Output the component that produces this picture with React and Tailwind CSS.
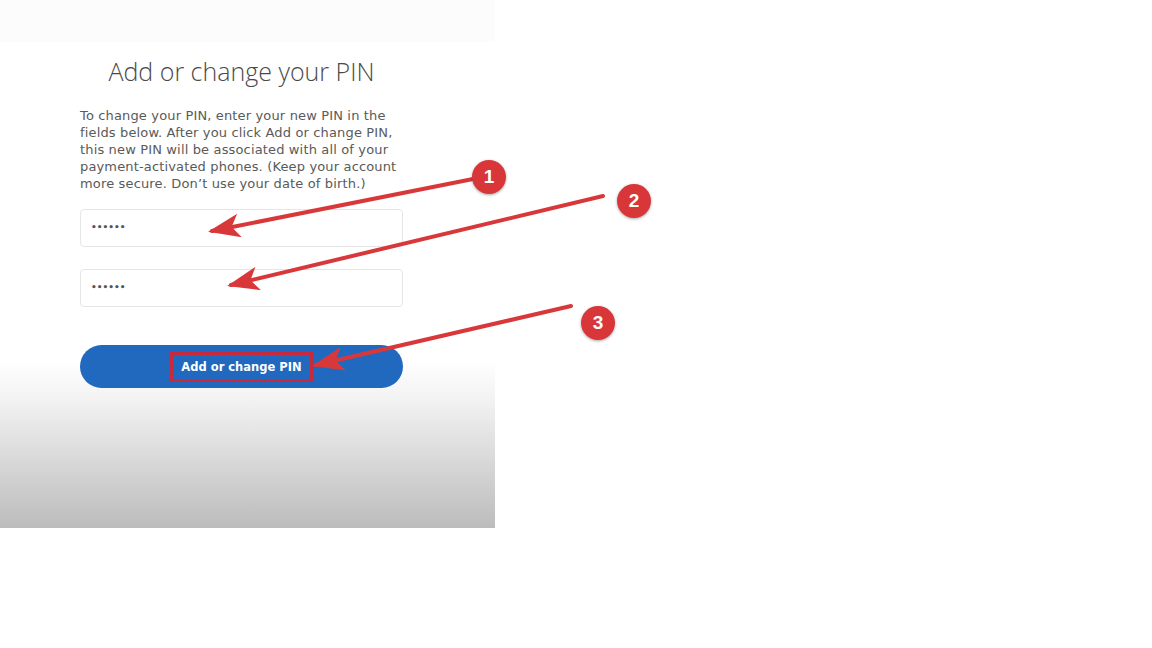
import React from 'react';

// Numbered red marker used in the annotation layer
const Marker = ({ n, className }) => (
  <div
    className={`absolute w-[34px] h-[34px] rounded-full bg-[#d9363a] text-white flex items-center justify-center text-[19px] font-bold shadow-[0_1px_3px_rgba(0,0,0,0.35)] ${className}`}
    style={{ fontFamily: '"Liberation Sans", Arial, sans-serif' }}
  >
    {n}
  </div>
);

const PinField = () => (
  <div className="h-[38px] w-full rounded-[4px] border border-[#e6e6e6] bg-white flex items-center px-[10px]">
    <span className="text-[9px] font-bold text-[#555]" style={{ fontFamily: '"DejaVu Sans", sans-serif' }}>••••••</span>
  </div>
);

const lines = [
  'To change your PIN, enter your new PIN in the',
  'fields below. After you click Add or change PIN,',
  'this new PIN will be associated with all of your',
  'payment-activated phones. (Keep your account',
  'more secure. Don’t use your date of birth.)',
];

const App = () => {
  return (
    <div className="relative w-[1152px] h-[648px] bg-white overflow-hidden" style={{ fontFamily: '"Open Sans", "DejaVu Sans", sans-serif' }}>
      {/* Form panel */}
      <div className="w-[495px] h-[528px] flex flex-col bg-[linear-gradient(to_bottom,#ffffff_0px,#ffffff_360px,#f3f3f3_398px,#bcbcbc_528px)]">
        <div className="h-[42px] bg-[#fdfcfd]" />
        <div className="pl-[80px] pr-[92px] flex flex-col">
          <h1 className="mt-[12px] text-center text-[25px] font-light text-[#4a4a4a] leading-[34px]">
            Add or change your PIN
          </h1>
          <p
            className="mt-[19px] text-[13px] leading-[17px] text-[#5a5a5a] whitespace-nowrap tracking-[0.15px]"
            style={{ fontFamily: '"DejaVu Sans", sans-serif' }}
          >
            {lines.map((l) => (
              <span key={l} className="block">{l}</span>
            ))}
          </p>
          <div className="mt-[17px] flex flex-col gap-[22px]">
            <PinField />
            <PinField />
          </div>
          <button className="mt-[38px] h-[43px] w-full rounded-full bg-[#2168bf] flex items-center justify-center">
            <span
              className="border-[3px] border-[#c62a3c] px-[8px] py-[5px] text-white text-[11.5px] font-bold leading-[14px]"
              style={{ fontFamily: '"DejaVu Sans", sans-serif' }}
            >
              Add or change PIN
            </span>
          </button>
        </div>
      </div>

      {/* Annotation arrows */}
      <svg className="absolute left-0 top-0" width="1152" height="648">
        <defs>
          <marker id="head" markerWidth="8" markerHeight="6" refX="7" refY="3" orient="auto" markerUnits="strokeWidth">
            <path d="M0,0 L8,3 L0,6 L2,3 Z" fill="#d9383b" />
          </marker>
        </defs>
        <g stroke="#d9383b" strokeWidth="4" strokeLinecap="round" fill="none">
          <line x1="473" y1="179" x2="212" y2="231" markerEnd="url(#head)" />
          <line x1="603" y1="196" x2="231" y2="285" markerEnd="url(#head)" />
          <line x1="571" y1="306" x2="316" y2="365" markerEnd="url(#head)" />
        </g>
      </svg>
      <Marker n="1" className="left-[472px] top-[160px]" />
      <Marker n="2" className="left-[617px] top-[184px]" />
      <Marker n="3" className="left-[581px] top-[306px]" />
    </div>
  );
};

export default App;
